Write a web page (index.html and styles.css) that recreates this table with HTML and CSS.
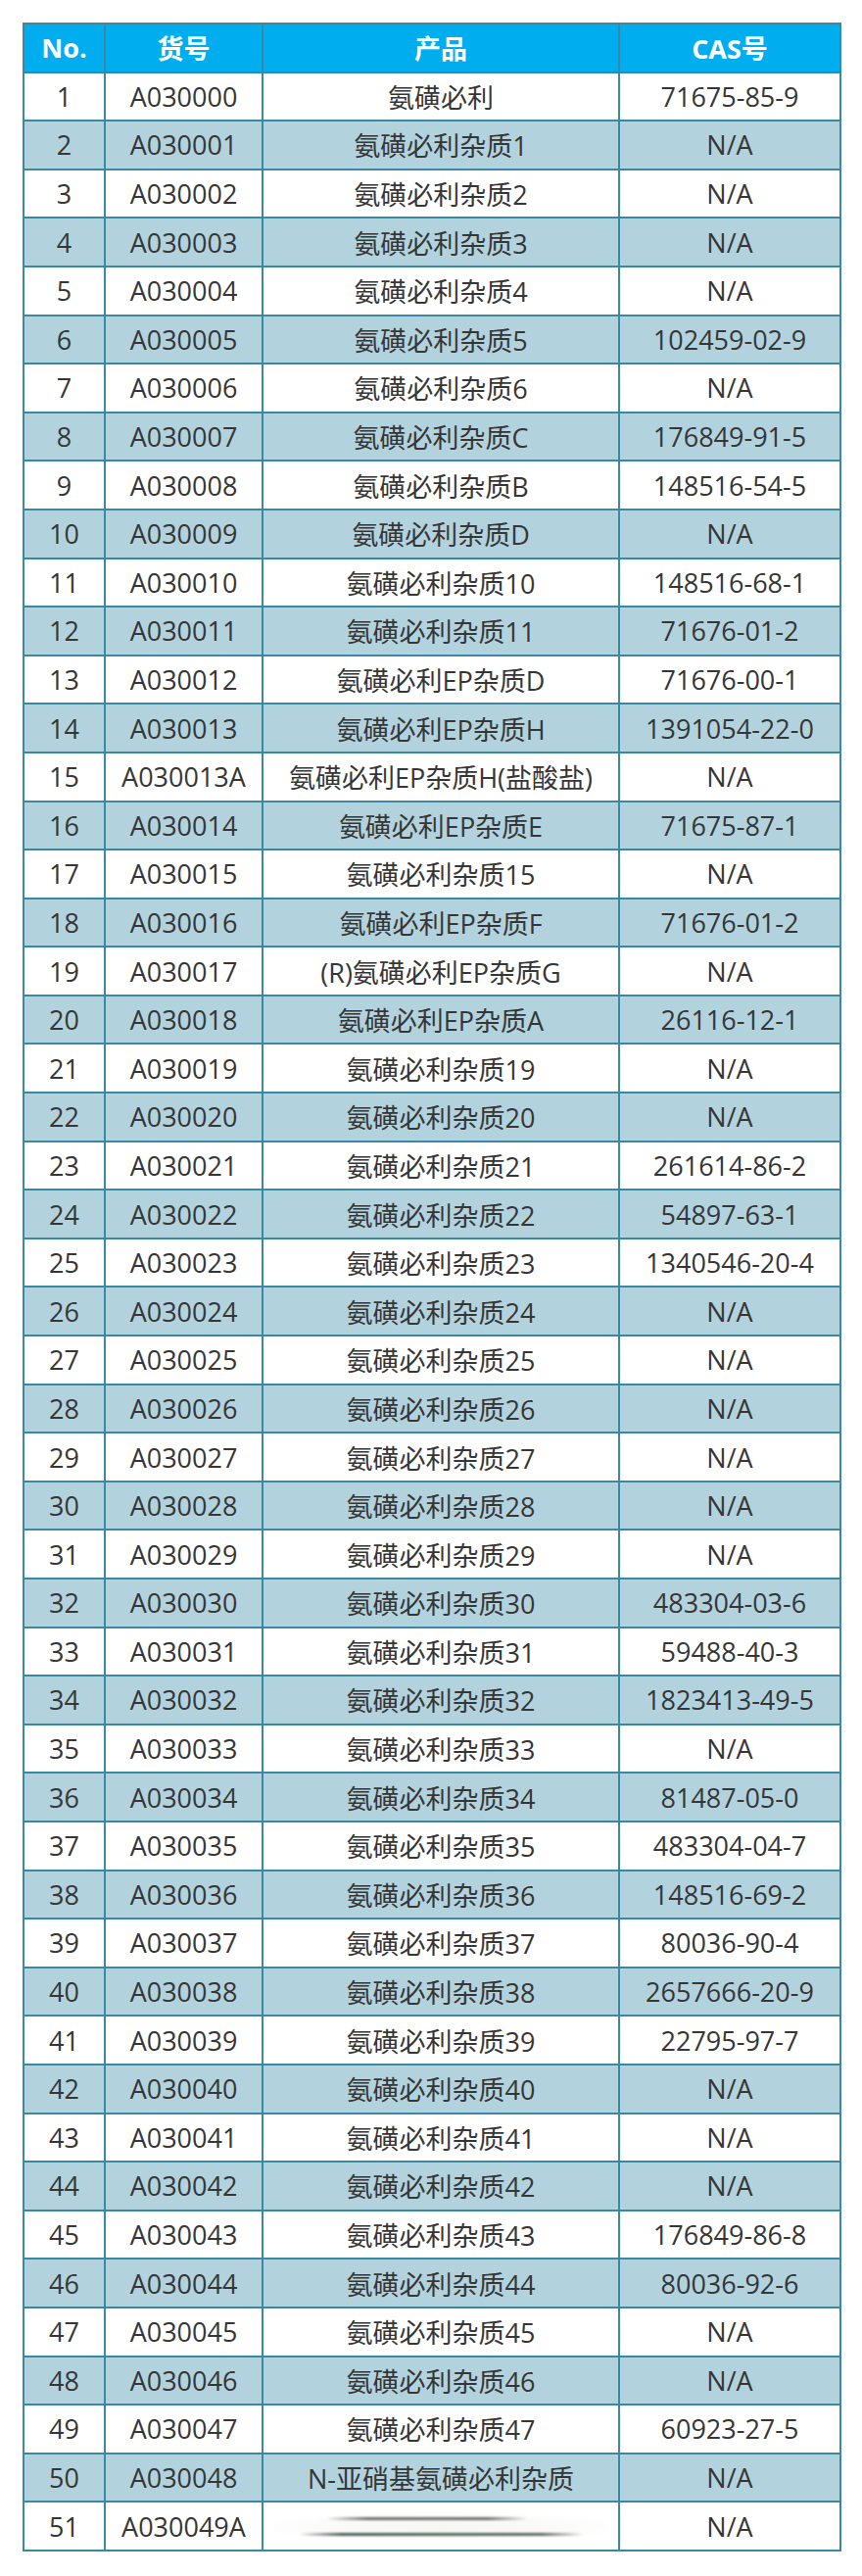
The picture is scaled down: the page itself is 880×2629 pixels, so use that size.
FILE: index.html
```html
<!DOCTYPE html>
<html lang="zh-CN">
<head>
<meta charset="utf-8">
<title>氨磺必利杂质</title>
<link rel="stylesheet" href="styles.css">
</head>
<body>
<div class="page">
<table class="grid">
<colgroup><col class="c-no"><col class="c-code"><col class="c-name"><col class="c-cas"></colgroup>
<thead>
<tr><th>No.</th><th>货号</th><th>产品</th><th>CAS号</th></tr>
</thead>
<tbody>
<tr><td>1</td><td>A030000</td><td>氨磺必利</td><td>71675-85-9</td></tr>
<tr><td>2</td><td>A030001</td><td>氨磺必利杂质1</td><td>N/A</td></tr>
<tr><td>3</td><td>A030002</td><td>氨磺必利杂质2</td><td>N/A</td></tr>
<tr><td>4</td><td>A030003</td><td>氨磺必利杂质3</td><td>N/A</td></tr>
<tr><td>5</td><td>A030004</td><td>氨磺必利杂质4</td><td>N/A</td></tr>
<tr><td>6</td><td>A030005</td><td>氨磺必利杂质5</td><td>102459-02-9</td></tr>
<tr><td>7</td><td>A030006</td><td>氨磺必利杂质6</td><td>N/A</td></tr>
<tr><td>8</td><td>A030007</td><td>氨磺必利杂质C</td><td>176849-91-5</td></tr>
<tr><td>9</td><td>A030008</td><td>氨磺必利杂质B</td><td>148516-54-5</td></tr>
<tr><td>10</td><td>A030009</td><td>氨磺必利杂质D</td><td>N/A</td></tr>
<tr><td>11</td><td>A030010</td><td>氨磺必利杂质10</td><td>148516-68-1</td></tr>
<tr><td>12</td><td>A030011</td><td>氨磺必利杂质11</td><td>71676-01-2</td></tr>
<tr><td>13</td><td>A030012</td><td>氨磺必利EP杂质D</td><td>71676-00-1</td></tr>
<tr><td>14</td><td>A030013</td><td>氨磺必利EP杂质H</td><td>1391054-22-0</td></tr>
<tr><td>15</td><td>A030013A</td><td>氨磺必利EP杂质H(盐酸盐)</td><td>N/A</td></tr>
<tr><td>16</td><td>A030014</td><td>氨磺必利EP杂质E</td><td>71675-87-1</td></tr>
<tr><td>17</td><td>A030015</td><td>氨磺必利杂质15</td><td>N/A</td></tr>
<tr><td>18</td><td>A030016</td><td>氨磺必利EP杂质F</td><td>71676-01-2</td></tr>
<tr><td>19</td><td>A030017</td><td>(R)氨磺必利EP杂质G</td><td>N/A</td></tr>
<tr><td>20</td><td>A030018</td><td>氨磺必利EP杂质A</td><td>26116-12-1</td></tr>
<tr><td>21</td><td>A030019</td><td>氨磺必利杂质19</td><td>N/A</td></tr>
<tr><td>22</td><td>A030020</td><td>氨磺必利杂质20</td><td>N/A</td></tr>
<tr><td>23</td><td>A030021</td><td>氨磺必利杂质21</td><td>261614-86-2</td></tr>
<tr><td>24</td><td>A030022</td><td>氨磺必利杂质22</td><td>54897-63-1</td></tr>
<tr><td>25</td><td>A030023</td><td>氨磺必利杂质23</td><td>1340546-20-4</td></tr>
<tr><td>26</td><td>A030024</td><td>氨磺必利杂质24</td><td>N/A</td></tr>
<tr><td>27</td><td>A030025</td><td>氨磺必利杂质25</td><td>N/A</td></tr>
<tr><td>28</td><td>A030026</td><td>氨磺必利杂质26</td><td>N/A</td></tr>
<tr><td>29</td><td>A030027</td><td>氨磺必利杂质27</td><td>N/A</td></tr>
<tr><td>30</td><td>A030028</td><td>氨磺必利杂质28</td><td>N/A</td></tr>
<tr><td>31</td><td>A030029</td><td>氨磺必利杂质29</td><td>N/A</td></tr>
<tr><td>32</td><td>A030030</td><td>氨磺必利杂质30</td><td>483304-03-6</td></tr>
<tr><td>33</td><td>A030031</td><td>氨磺必利杂质31</td><td>59488-40-3</td></tr>
<tr><td>34</td><td>A030032</td><td>氨磺必利杂质32</td><td>1823413-49-5</td></tr>
<tr><td>35</td><td>A030033</td><td>氨磺必利杂质33</td><td>N/A</td></tr>
<tr><td>36</td><td>A030034</td><td>氨磺必利杂质34</td><td>81487-05-0</td></tr>
<tr><td>37</td><td>A030035</td><td>氨磺必利杂质35</td><td>483304-04-7</td></tr>
<tr><td>38</td><td>A030036</td><td>氨磺必利杂质36</td><td>148516-69-2</td></tr>
<tr><td>39</td><td>A030037</td><td>氨磺必利杂质37</td><td>80036-90-4</td></tr>
<tr><td>40</td><td>A030038</td><td>氨磺必利杂质38</td><td>2657666-20-9</td></tr>
<tr><td>41</td><td>A030039</td><td>氨磺必利杂质39</td><td>22795-97-7</td></tr>
<tr><td>42</td><td>A030040</td><td>氨磺必利杂质40</td><td>N/A</td></tr>
<tr><td>43</td><td>A030041</td><td>氨磺必利杂质41</td><td>N/A</td></tr>
<tr><td>44</td><td>A030042</td><td>氨磺必利杂质42</td><td>N/A</td></tr>
<tr><td>45</td><td>A030043</td><td>氨磺必利杂质43</td><td>176849-86-8</td></tr>
<tr><td>46</td><td>A030044</td><td>氨磺必利杂质44</td><td>80036-92-6</td></tr>
<tr><td>47</td><td>A030045</td><td>氨磺必利杂质45</td><td>N/A</td></tr>
<tr><td>48</td><td>A030046</td><td>氨磺必利杂质46</td><td>N/A</td></tr>
<tr><td>49</td><td>A030047</td><td>氨磺必利杂质47</td><td>60923-27-5</td></tr>
<tr><td>50</td><td>A030048</td><td>N-亚硝基氨磺必利杂质</td><td>N/A</td></tr>
<tr><td>51</td><td>A030049A</td><td><div class="smudge"><span class="stroke stroke-a"></span><span class="stroke stroke-b"></span></div></td><td>N/A</td></tr>
</tbody>
</table>
</div>
</body>
</html>
```
FILE: styles.css
```css
html, body {
  margin: 0;
  padding: 0;
  background: #ffffff;
}

.page {
  padding: 23px 24px 24px 23px;
}

.grid {
  border-collapse: collapse;
  table-layout: fixed;
  width: 834px;
  font-family: "Open Sans", "Noto Sans CJK SC", sans-serif;
  font-size: 27px;
  color: #363636;
  border: 2px solid #3a89a3;
}

.c-no { width: 83px; }
.c-code { width: 161px; }
.c-name { width: 364px; }
.c-cas { width: 226px; }

.grid th,
.grid td {
  border: 2px solid #3a89a3;
  text-align: center;
  vertical-align: middle;
  padding: 0;
  white-space: nowrap;
  overflow: hidden;
}

.grid tr {
  height: 49.6px;
}

.grid th {
  background: #00aeef;
  color: #ffffff;
  font-weight: 700;
}

.grid tbody tr:nth-child(even) td {
  background: #b2d3de;
}

.smudge {
  display: flex;
  flex-direction: column;
  align-items: center;
  gap: 13px;
  padding: 4px 0;
  margin: 0 10px;
  background: radial-gradient(ellipse at center, #f6f6f3 0%, #fbfbfa 55%, rgba(255,255,255,0) 80%);
}

.stroke {
  display: block;
  height: 3px;
  border-radius: 2px;
  filter: blur(0.8px);
}

.stroke-a {
  width: 206px;
  margin-left: -28px;
  background: linear-gradient(90deg, rgba(110,110,110,0) 0%, #6f716f 20%, #6f716f 80%, rgba(110,110,110,0) 100%);
}

.stroke-b {
  width: 291px;
  background: linear-gradient(90deg, rgba(80,90,90,0) 0%, #4f5d5c 15%, #5c6a60 85%, rgba(120,130,80,0) 100%);
}
```
